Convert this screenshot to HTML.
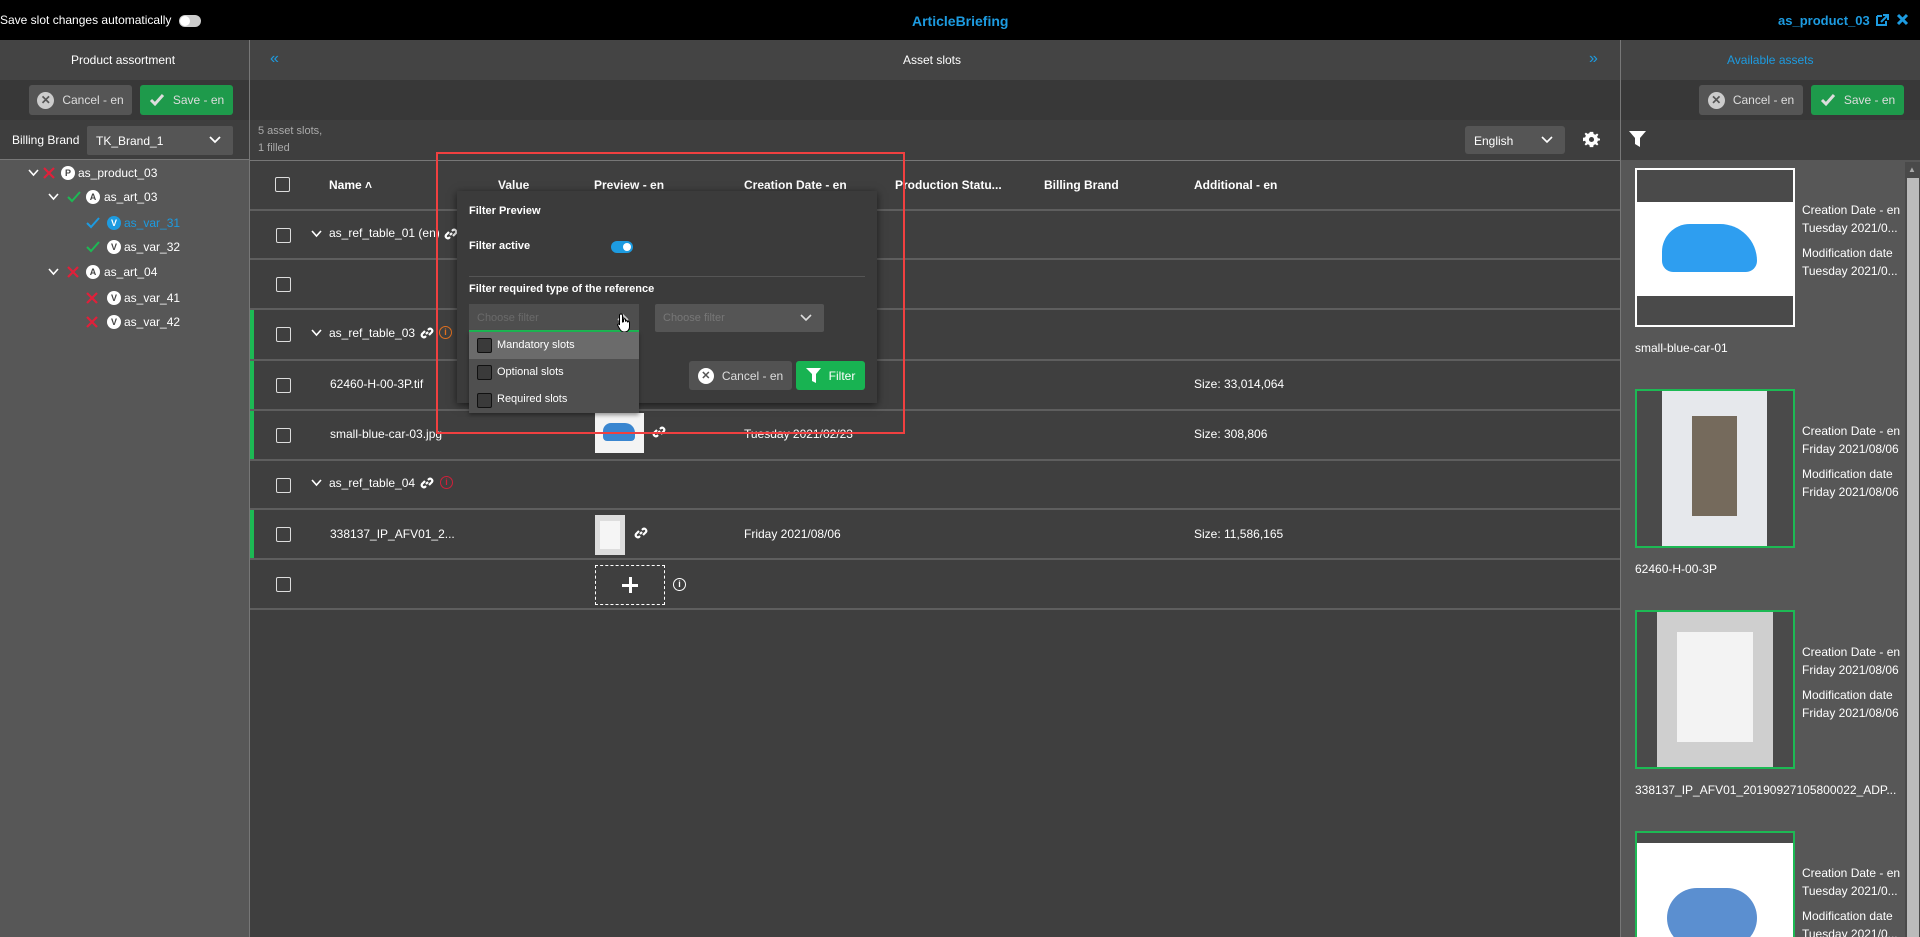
<!DOCTYPE html>
<html style="width:1920px;height:937px;overflow:hidden"><head><meta charset="utf-8"><style>
*{box-sizing:border-box;margin:0;padding:0}
body{width:1920px;height:937px;overflow:hidden;background:#3f3f3f;font-family:"Liberation Sans",Arial,sans-serif;font-size:12px;color:#fff;position:relative}
.a{position:absolute;white-space:nowrap}
.cb{position:absolute;width:15px;height:15px;border:1.5px solid #ddd;border-radius:2px}
.btn{position:absolute;border-radius:3px;display:flex;align-items:center;justify-content:center;gap:8px;font-size:12px}
.gray{background:#555;color:#ddd}
.green{background:#1e9a4b;color:#ddd}
.hline{position:absolute;height:2px;background:#5e5e5e}
.bold{font-weight:bold}
.circ{display:inline-flex;width:14px;height:14px;border-radius:50%;background:#fff;color:#444;font-size:9px;font-weight:bold;align-items:center;justify-content:center}
</style></head><body>
<!-- top bar -->
<div class="a" style="left:0;top:0;width:1920px;height:40px;background:#000"></div>
<div class="a" style="left:0;top:13px;font-size:12px">Save slot changes automatically</div>
<div class="a" style="left:179px;top:15px;width:22px;height:12px;border-radius:6px;background:#ccc"><div style="position:absolute;left:1px;top:1px;width:10px;height:10px;border-radius:50%;background:#fff"></div></div>
<div class="a bold" style="left:912px;top:13px;color:#1d9be0;font-size:14px">ArticleBriefing</div>
<div class="a bold" style="left:1778px;top:13px;color:#1d9be0;font-size:13px">as_product_03</div>
<svg class="a" style="left:1875px;top:13px" width="14" height="14" viewBox="0 0 14 14"><path d="M2 3h5M2 3v9h9V8" stroke="#1d9be0" stroke-width="2" fill="none"/><path d="M6 9l6-6M8 2h5v5" stroke="#1d9be0" stroke-width="2" fill="none"/></svg>
<svg class="a" style="left:1896px;top:13px" width="13" height="13" viewBox="0 0 13 13"><path d="M2 2l9 9M11 2l-9 9" stroke="#1d9be0" stroke-width="3"/></svg>

<!-- left panel -->
<div class="a" style="left:0;top:40px;width:249px;height:897px;background:#575757"></div>
<div class="a" style="left:0;top:40px;width:249px;height:40px;background:#444"></div>
<div class="a" style="left:0;top:80px;width:249px;height:40px;background:#383838"></div>
<div class="a" style="left:0;top:120px;width:249px;height:40px;background:#3e3e3e"></div>
<div class="a" style="left:0;top:159px;width:249px;height:1px;background:#777"></div>
<div class="a" style="left:249px;top:40px;width:1px;height:897px;background:#777"></div>
<div class="a" style="left:71px;top:53px">Product assortment</div>
<div class="btn gray" style="left:29px;top:85px;width:103px;height:30px"><span class="circ" style="width:17px;height:17px;background:#ccc;color:#555;font-size:12px">✕</span>Cancel - en</div>
<div class="btn green" style="left:140px;top:85px;width:93px;height:30px"><svg width="16" height="14"><path d="M2 7l4 4 8-9" stroke="#ddd" stroke-width="3" fill="none"/></svg>Save - en</div>
<div class="a" style="left:12px;top:133px">Billing Brand</div>
<div class="a" style="left:87px;top:126px;width:146px;height:29px;background:#555;border-radius:2px"><span style="position:absolute;left:9px;top:8px">TK_Brand_1</span><svg style="position:absolute;right:12px;top:10px" width="12" height="8"><path d="M1 1l5 5 5-5" stroke="#fff" stroke-width="1.8" fill="none"/></svg></div>
<div id="tree"></div>

<!-- middle -->
<div class="a" style="left:250px;top:40px;width:1371px;height:40px;background:#444"></div>
<div class="a" style="left:250px;top:80px;width:1371px;height:40px;background:#383838"></div>
<div class="a" style="left:250px;top:120px;width:1371px;height:40px;background:#3e3e3e"></div>
<div class="a" style="left:270px;top:50px;color:#1d9be0;font-size:16px">«</div>
<div class="a" style="left:1589px;top:50px;color:#1d9be0;font-size:16px">»</div>
<div class="a" style="left:903px;top:53px">Asset slots</div>
<div class="a" style="left:258px;top:123px;color:#aaa;font-size:11px;line-height:17px">5 asset slots,<br>1 filled</div>
<div class="a" style="left:1465px;top:126px;width:100px;height:28px;background:#555;border-radius:3px"><span style="position:absolute;left:9px;top:8px">English</span><svg style="position:absolute;right:12px;top:10px" width="12" height="8"><path d="M1 1l5 5 5-5" stroke="#fff" stroke-width="1.6" fill="none"/></svg></div>
<svg class="a" style="left:1583px;top:131px" width="17" height="17" viewBox="0 0 20 20"><path d="M10 1l2 0 .5 2.5 2 .9 2.1-1.5 1.5 1.5-1.5 2.1.9 2 2.5.5v2l-2.5.5-.9 2 1.5 2.1-1.5 1.5-2.1-1.5-2 .9L12 19H8l-.5-2.5-2-.9-2.1 1.5-1.5-1.5 1.5-2.1-.9-2L0 12V8l2.5-.5.9-2L1.9 3.4 3.4 1.9l2.1 1.5 2-.9L8 1z" fill="#fff"/><circle cx="10" cy="10" r="3" fill="#3e3e3e"/></svg>
<div class="a" style="left:250px;top:160px;width:1371px;height:1px;background:#777"></div>
<div class="cb" style="left:275px;top:177px"></div>
<div class="a bold" style="left:329px;top:178px">Name ˄</div>
<div class="a bold" style="left:498px;top:178px">Value</div>
<div class="a bold" style="left:594px;top:178px">Preview - en</div>
<div class="a bold" style="left:744px;top:178px">Creation Date - en</div>
<div class="a bold" style="left:895px;top:178px">Production Statu...</div>
<div class="a bold" style="left:1044px;top:178px">Billing Brand</div>
<div class="a bold" style="left:1194px;top:178px">Additional - en</div>
<div id="rows"></div>

<!-- right panel -->
<div class="a" style="left:1621px;top:40px;width:299px;height:897px;background:#575757;overflow:hidden"><div id="cards" style="position:absolute;left:-1621px;top:-40px;width:1920px;height:937px"></div></div>
<div class="a" style="left:1621px;top:40px;width:299px;height:40px;background:#444"></div>
<div class="a" style="left:1621px;top:80px;width:299px;height:40px;background:#383838"></div>
<div class="a" style="left:1621px;top:120px;width:299px;height:40px;background:#3e3e3e"></div>
<div class="a" style="left:1620px;top:40px;width:1px;height:897px;background:#777"></div>
<div class="a" style="left:1727px;top:53px;color:#1d9be0">Available assets</div>
<div class="btn gray" style="left:1699px;top:85px;width:104px;height:30px"><span class="circ" style="width:17px;height:17px;background:#ccc;color:#555;font-size:12px">✕</span>Cancel - en</div>
<div class="btn green" style="left:1811px;top:85px;width:93px;height:30px"><svg width="16" height="14"><path d="M2 7l4 4 8-9" stroke="#ddd" stroke-width="3" fill="none"/></svg>Save - en</div>
<svg class="a" style="left:1629px;top:131px" width="17" height="16"><path d="M0 0h17l-6 7v9l-5-3V7z" fill="#fff"/></svg>
<div class="a" style="left:1905px;top:162px;width:15px;height:775px;background:#4a4a4a"></div>
<div class="a" style="left:1907px;top:178px;width:12px;height:759px;background:#bbb"></div>
<div class="a" style="left:1908px;top:165px;color:#aaa;font-size:8px">▲</div>

<!-- popup -->
<div class="a" style="left:457px;top:191px;width:420px;height:212px;background:#3b3b3b;box-shadow:0 2px 8px rgba(0,0,0,.6)"></div>
<div class="a bold" style="left:469px;top:205px;font-size:11px">Filter Preview</div>
<div class="a bold" style="left:469px;top:240px;font-size:11px">Filter active</div>
<div class="a" style="left:611px;top:241px;width:22px;height:12px;border-radius:6px;background:#1d9be0"><div style="position:absolute;right:2px;top:2px;width:8px;height:8px;border-radius:50%;background:#fff"></div></div>
<div class="a" style="left:469px;top:276px;width:396px;height:1px;background:#555"></div>
<div class="a bold" style="left:469px;top:283px;font-size:11px">Filter required type of the reference</div>
<div class="a" style="left:469px;top:304px;width:170px;height:28px;background:#4e4e4e;border-bottom:2px solid #1db954"><span style="position:absolute;left:8px;top:8px;color:#6a6a6a;font-size:11px">Choose filter</span><svg style="position:absolute;right:10px;top:9px" width="12" height="8"><path d="M1 7l5-5 5 5" stroke="#ccc" stroke-width="1.6" fill="none"/></svg></div>
<svg class="a" style="left:617px;top:313px" width="16" height="20" viewBox="0 0 16 20"><path d="M4 1c1 0 1.5.6 1.5 1.5V9l1-.3V6.8c0-1.2 2-1.2 2 0v1.8c.2-1.1 2-1.1 2 0v.8c.2-1 2-1 2 .2V14c0 2.5-2 5-4.5 5H7c-2 0-3-1.2-4-2.5L.8 12.5c-.6-1 .6-2 1.5-1.2L2.5 12V2.5C2.5 1.6 3 1 4 1z" fill="#fff" stroke="#000" stroke-width="1"/></svg>
<div class="a" style="left:655px;top:304px;width:169px;height:28px;background:#555;border-radius:2px"><span style="position:absolute;left:8px;top:8px;color:#777;font-size:11px">Choose filter</span><svg style="position:absolute;right:12px;top:10px" width="12" height="8"><path d="M1 1l5 5 5-5" stroke="#ddd" stroke-width="1.6" fill="none"/></svg></div>
<div class="a" style="left:469px;top:332px;width:170px;height:81px;background:#4f4f4f;box-shadow:0 2px 4px rgba(0,0,0,.4)"></div>
<div class="a" style="left:469px;top:332px;width:170px;height:27px;background:#6b6b6b"></div>
<div class="cb" style="left:477px;top:338px;border:1.5px solid #111;background:#3a3a3a"></div>
<div class="a" style="left:497px;top:339px;font-size:11px">Mandatory slots</div>
<div class="cb" style="left:477px;top:365px;border:1.5px solid #111;background:#3a3a3a"></div>
<div class="a" style="left:497px;top:366px;font-size:11px">Optional slots</div>
<div class="cb" style="left:477px;top:393px;border:1.5px solid #111;background:#3a3a3a"></div>
<div class="a" style="left:497px;top:393px;font-size:11px">Required slots</div>
<div class="btn gray" style="left:689px;top:361px;width:103px;height:29px;background:#525252"><span class="circ" style="width:16px;height:16px;background:#fff;color:#555;font-size:11px">✕</span>Cancel - en</div>
<div class="btn" style="left:796px;top:361px;width:69px;height:29px;background:#18b352;color:#fff"><svg width="15" height="15"><path d="M0 0h15l-5 6v9l-4-2V6z" fill="#fff"/></svg>Filter</div>
<div class="a" style="left:436px;top:152px;width:469px;height:282px;border:2px solid #f04040"></div>

<script>
var t='',tree=[[173,28,'x','P','as_product_03',43,61,78],[197,48,'c','A','as_art_03',67,86,104],[223,0,'b','V','as_var_31',86,107,124],[247,0,'c','V','as_var_32',86,107,124],[272,48,'x','A','as_art_04',67,86,104],[298,0,'x','V','as_var_41',86,107,124],[322,0,'x','V','as_var_42',86,107,124]];
tree.forEach(function(r){var y=r[0];
if(r[1])t+='<svg class="a" style="left:'+r[1]+'px;top:'+(y-4)+'px" width="11" height="8"><path d="M1 1l4.5 5 4.5-5" stroke="#fff" stroke-width="1.6" fill="none"/></svg>';
var col=r[2]=='x'?'#e0203a':(r[2]=='c'?'#1db954':'#1d9be0');
if(r[2]=='x')t+='<svg class="a" style="left:'+r[5]+'px;top:'+(y-6)+'px" width="12" height="12"><path d="M1 1l10 10M11 1L1 11" stroke="'+col+'" stroke-width="2.2"/></svg>';
else t+='<svg class="a" style="left:'+r[5]+'px;top:'+(y-6)+'px" width="14" height="12"><path d="M1 6l4 4 8-9" stroke="'+col+'" stroke-width="2" fill="none"/></svg>';
t+='<span class="a circ" style="left:'+r[6]+'px;top:'+(y-7)+'px;'+(r[2]=='b'?'background:#1d9be0;color:#fff':'')+'">'+r[3]+'</span>';
t+='<div class="a" style="left:'+r[7]+'px;top:'+(y-7)+'px;'+(r[2]=='b'?'color:#1d9be0':'')+'">'+r[4]+'</div>';});
document.getElementById('tree').innerHTML=t;
var link=function(x,y){return '<svg class="a" style="left:'+x+'px;top:'+y+'px" width="16" height="16" viewBox="0 0 16 16"><path d="M7 9l2-2M6 6l-3 3a2.2 2.2 0 003 3l1-1M10 10l3-3a2.2 2.2 0 00-3-3l-1 1" stroke="#fff" stroke-width="2.2" fill="none"/></svg>'};
var info=function(x,y,c){return '<div class="a" style="left:'+x+'px;top:'+y+'px;width:13px;height:13px;border:1.5px solid '+c+';border-radius:50%;color:'+c+';font-size:9px;font-weight:bold;text-align:center;line-height:10px">i</div>'};
var s='',lines=[209,258,308,359,409,459,508,558,608];
lines.forEach(function(y){s+='<div class="hline" style="left:250px;top:'+y+'px;width:1371px"></div>'});
[2,3,4,6].forEach(function(i){s+='<div class="a" style="left:250px;top:'+(lines[i]+2)+'px;width:4px;height:'+(lines[i+1]-lines[i]-2)+'px;background:#1db954"></div>'});
for(var i=0;i<8;i++){s+='<div class="cb" style="left:276px;top:'+(lines[i]+19)+'px"></div>'}
var chev=function(y){return '<svg class="a" style="left:311px;top:'+y+'px" width="11" height="8"><path d="M1 1l4.5 5 4.5-5" stroke="#fff" stroke-width="1.6" fill="none"/></svg>'};
s+=chev(230)+'<div class="a" style="left:329px;top:226px">as_ref_table_01 (en)</div>'+link(443,226);
s+=chev(329)+'<div class="a" style="left:329px;top:326px">as_ref_table_03</div>'+link(419,325)+info(439,326,'#e07020');
s+='<div class="a" style="left:330px;top:377px">62460-H-00-3P.tif</div><div class="a" style="left:1194px;top:377px">Size: 33,014,064</div>';
s+='<div class="a" style="left:330px;top:427px">small-blue-car-03.jpg</div><div class="a" style="left:595px;top:413px;width:49px;height:40px;background:#f4f4f4"><div style="position:absolute;left:8px;top:10px;width:32px;height:18px;border-radius:8px 10px 4px 4px;background:#3a86d0"></div></div>'+link(651,424)+'<div class="a" style="left:744px;top:427px">Tuesday 2021/02/23</div><div class="a" style="left:1194px;top:427px">Size: 308,806</div>';
s+=chev(479)+'<div class="a" style="left:329px;top:476px">as_ref_table_04</div>'+link(419,475)+info(440,476,'#d0203a');
s+='<div class="a" style="left:330px;top:527px">338137_IP_AFV01_2...</div><div class="a" style="left:595px;top:515px;width:30px;height:40px;background:#ddd"><div style="position:absolute;left:5px;top:6px;width:20px;height:28px;background:#f5f5f5"></div></div>'+link(633,525)+'<div class="a" style="left:744px;top:527px">Friday 2021/08/06</div><div class="a" style="left:1194px;top:527px">Size: 11,586,165</div>';
s+='<div class="a" style="left:595px;top:565px;width:70px;height:40px;border:1.5px dashed #fff"><div style="position:absolute;left:26px;top:18px;width:16px;height:3px;background:#fff"></div><div style="position:absolute;left:32.5px;top:11px;width:3px;height:16px;background:#fff"></div></div>'+info(673,578,'#fff');
document.getElementById('rows').innerHTML=s;
var c='',cards=[[168,'#fff','small-blue-car-01','Tuesday 2021/0...','Tuesday 2021/0...'],[389,'#1db954','62460-H-00-3P','Friday 2021/08/06','Friday 2021/08/06'],[610,'#1db954','338137_IP_AFV01_20190927105800022_ADP...','Friday 2021/08/06','Friday 2021/08/06'],[831,'#1db954','','Tuesday 2021/0...','Tuesday 2021/0...']];
cards.forEach(function(k,i){var y=k[0];
var inner=i==0?'<div style="position:absolute;left:0;top:32px;width:100%;height:94px;background:#fff"><div style="position:absolute;left:25px;top:22px;width:95px;height:48px;border-radius:30px 40px 12px 12px;background:#2e9ef0"></div></div>':i==1?'<div style="position:absolute;left:25px;top:0;width:105px;height:100%;background:#e6e8ec"><div style="position:absolute;left:30px;top:25px;width:45px;height:100px;background:#756a5c"></div></div>':i==2?'<div style="position:absolute;left:20px;top:0;width:116px;height:100%;background:#cfcfcf"><div style="position:absolute;left:20px;top:20px;width:76px;height:110px;background:#f3f3f3"></div></div>':'<div style="position:absolute;left:0;top:10px;width:100%;height:120px;background:#fff"><div style="position:absolute;left:30px;top:45px;width:90px;height:60px;border-radius:30px;background:#5b8fd0"></div></div>';
c+='<div class="a" style="left:1635px;top:'+y+'px;width:160px;height:159px;border:2px solid '+k[1]+';background:#4a4a4a;overflow:hidden">'+inner+'</div>';
c+='<div class="a" style="left:1802px;top:'+(y+33)+'px;line-height:18px">Creation Date - en<br>'+k[3]+'</div><div class="a" style="left:1802px;top:'+(y+76)+'px;line-height:18px">Modification date<br>'+k[4]+'</div>';
if(k[2])c+='<div class="a" style="left:1635px;top:'+(y+173)+'px">'+k[2]+'</div>';});
document.getElementById('cards').innerHTML=c;
</script>
</body></html>
